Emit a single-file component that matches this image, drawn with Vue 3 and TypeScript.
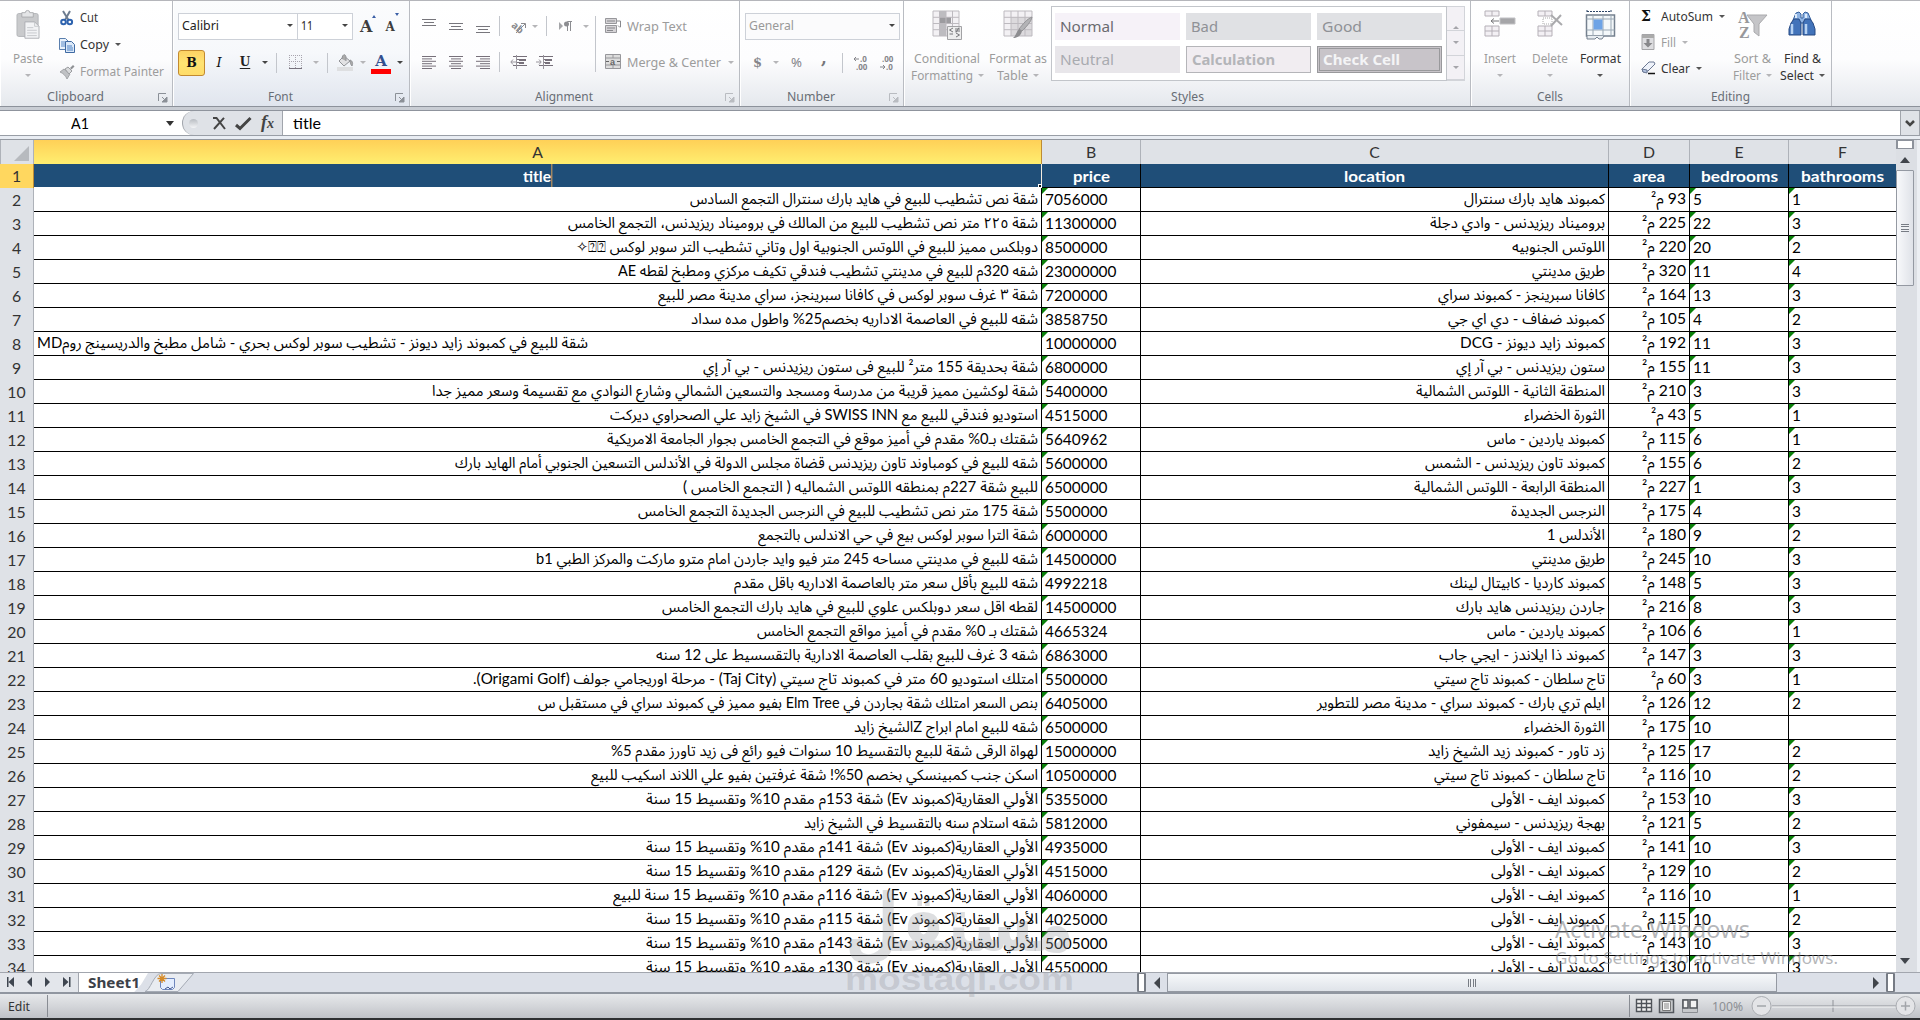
<script setup lang="ts">
import type { Directive } from 'vue'

interface Row {
  n: number
  title: string
  tw: number
  price: string
  loc: string
  lw: number
  area: number
  bed: string
  bath: string
  left?: boolean
}

/* Squeezes or stretches a label so that it takes exactly the given width. */
const vFit: Directive<HTMLElement, number> = {
  mounted(el, binding) {
    const natural = el.getBoundingClientRect().width
    if (!natural || !binding.value) return
    el.style.transformOrigin = 'left center'
    el.style.transform = `scaleX(${binding.value / natural})`
    el.style.marginRight = `${binding.value - natural}px`
  },
}

type Raw = [string, number, string, string, number, number, string, string]
const ev = (m: number) => `الأولي العقارية(كمبوند Ev) شقة ${m}م مقدم 10% وتقسيط 15 سنة`
const eve = 'كمبوند ايف - الأولى'

const raw: Raw[] = [
  ['شقة نص تشطيب للبيع في هايد بارك سنترال التجمع السادس', 348, '7056000', 'كمبوند هايد بارك سنترال', 141, 93, '5', '1'],
  ['شقة ٢٢٥ متر نص تشطيب للبيع من المالك في بروميناد ريزيدنس، التجمع الخامس', 470, '11300000', 'بروميناد ريزيدنس - وادي دجلة', 175, 225, '22', '3'],
  ['دوبلكس مميز للبيع في اللوتس الجنوبية اول وتاني تشطيب التر سوبر لوكس ⍰⍰✧', 462, '8500000', 'اللوتس الجنوبيه', 93, 220, '20', '2'],
  ['شقه 320م للبيع في مدينتي تشطيب فندقي تكيف مركزي ومطبخ لقطه AE', 420, '23000000', 'طريق مدينتي', 73, 320, '11', '4'],
  ['شقة ٣ غرف سوبر لوكس في كافانا سبرينجز، سراي مدينة مصر للبيع', 380, '7200000', 'كافانا سبرينجز - كمبوند سراي', 167, 164, '13', '3'],
  ['شقه للبيع في العاصمة الاداريه بخصم25% واطول مده سداد', 347, '3858750', 'كمبوند ضفاف - دي اي جي', 157, 105, '4', '2'],
  ['شقة للبيع في كمبوند زايد ديونز - تشطيب سوبر لوكس بحري - شامل مطبخ والدريسينج رومMD', 551, '10000000', 'كمبوند زايد ديونز - DCG', 145, 192, '11', '3'],
  ['شقة بحديقة 155 متر² للبيع فى ستون ريزيدنس - بي آر إي', 335, '6800000', 'ستون ريزيدنس - بي آر إي', 149, 155, '11', '3'],
  ['شقة لوكشين مميز قريبة من مدرسة ومسجد والتسعين الشمالي وشارع النوادي مع تقسيمة وسعر مميز جدا', 606, '5400000', 'المنطقة الثانية - اللوتس الشمالية', 189, 210, '3', '3'],
  ['استوديو فندقي للبيع مع SWISS INN في الشيخ زايد علي الصحراوي ديركت', 428, '4515000', 'الثورة الخضراء', 81, 43, '5', '1'],
  ['شقتك بـ0% مقدم في أميز موقع في التجمع الخامس بجوار الجامعة الامريكية', 431, '5640962', 'كمبوند ياردين - ماس', 118, 115, '6', '1'],
  ['شقه للبيع في كومباوند تاون ريزيدنس قضاة مجلس الدولة في الأندلس التسعين الجنوبي أمام الهايد بارك', 583, '5600000', 'كمبوند تاون ريزيدنس - الشمس', 180, 155, '6', '2'],
  ['للبيع شقة 227م بمنطقه اللوتس الشماليه ( التجمع الخامس )', 355, '6500000', 'المنطقة الرابعة - اللوتس الشمالية', 191, 227, '1', '3'],
  ['شقة 175 متر نص تشطيب للبيع في النرجس الجديدة التجمع الخامس', 400, '5500000', 'النرجس الجديدة', 94, 175, '4', '3'],
  ['شقة الترا سوبر لوكس بيع في حي الاندلس بالتجمع', 280, '6000000', 'الأندلس 1', 58, 180, '9', '2'],
  ['شقه للبيع في مدينتي مساحه 245 متر فيو وايد جاردن امام مترو ماركت والمركز الطبي b1', 502, '14500000', 'طريق مدينتي', 73, 245, '10', '3'],
  ['شقه للبيع بأقل سعر متر بالعاصمة الاداريه باقل مقدم', 304, '4992218', 'كمبوند كارديا - كابيتال لينك', 155, 148, '5', '3'],
  ['لقطه اقل سعر دوبلكس علوي للبيع في هايد بارك التجمع الخامس', 376, '14500000', 'جاردن ريزيدنس هايد بارك', 149, 216, '8', '3'],
  ['شقتك بـ 0% مقدم في أميز مواقع التجمع الخامس', 281, '4665324', 'كمبوند ياردين - ماس', 118, 106, '6', '1'],
  ['شقه 3 غرف للبيع بقلب العاصمة الادارية بالتقسسيط على 12 سنه', 382, '6863000', 'كمبوند ذا ايلاندز - ايجي جاب', 166, 147, '3', '3'],
  ['امتلك استوديو 60 متر في كمبوند تاج سيتي (Taj City) - مرحلة اوريجامي جولف (Origami Golf).', 565, '5500000', 'تاج سلطان - كمبوند تاج سيتي', 171, 60, '3', '1'],
  ['بنص السعر امتلك شقة بجاردن في Elm Tree بفيو مميز في كمبوند سراي في مستقبل س', 500, '6405000', 'ايلم تري بارك - كمبوند سراي - مدينة مصر للتطوير', 288, 126, '12', '2'],
  ['شقه للبيع امام ابراج Zالشيخ زايد', 184, '6500000', 'الثورة الخضراء', 81, 175, '10', ''],
  ['لهواة الرقى شقة للبيع بالتقسيط 10 سنوات فيو رائع فى زيد تاورز مقدم 5%', 427, '15000000', 'زد تاور - كمبوند زيد الشيخ زايد', 177, 125, '17', '2'],
  ['اسكن جنب كمبينسكي بخصم 50%! شقة غرفتين بفيو علي اللاند اسكيب للبيع', 447, '10500000', 'تاج سلطان - كمبوند تاج سيتي', 171, 116, '10', '2'],
  [ev(153), 392, '5355000', eve, 114, 153, '10', '3'],
  ['شقه استلام سنه بالتقسيط في الشيخ زايد', 234, '5812000', 'بهجة ريزيدنس - سيمفوني', 149, 121, '5', '2'],
  [ev(141), 392, '4935000', eve, 114, 141, '10', '3'],
  [ev(129), 392, '4515000', eve, 114, 129, '10', '2'],
  [ev(116) + ' للبيع', 425, '4060000', eve, 114, 116, '10', '1'],
  [ev(115), 392, '4025000', eve, 114, 115, '10', '2'],
  [ev(143), 392, '5005000', eve, 114, 143, '10', '3'],
  [ev(130), 392, '4550000', eve, 114, 130, '10', '3'],
]

const rows: Row[] = raw.map((r, i) => ({
  n: i + 2, title: r[0], tw: r[1], price: r[2], loc: r[3], lw: r[4], area: r[5], bed: r[6], bath: r[7], left: i === 6,
}))
</script>

<template>
  <div class="app">
    <div class="ribbon">
      <section class="group g-clip">
        <div class="body">
          <div class="big paste dis">
            <svg width="30" height="34" viewBox="0 0 30 34"><rect x="2.500" y="4" width="24" height="26" rx="2" fill="#c9cacc" stroke="#b1b3b6" /><path d="M8 3h4a2.500 2.500 0 0 1 5 0h4v5H8z" fill="#e4e5e7" stroke="#a7a9ac" /><path d="M11.500 13.500h11l5 5V32h-16z" fill="#f2f3f5" stroke="#aaacb0" /><path d="M22.500 13.500v5h5M14 20h7M14 23h11M14 26h11M14 29h11" fill="none" stroke="#c3c5c8" /></svg>
            <span v-fit="30">Paste</span><i class="arr"></i>
          </div>
          <div class="stack clipcol">
            <div class="line"><svg width="16" height="16" viewBox="0 0 16 16"><path d="M4 1l5.500 9M11 1L6 10" stroke="#6d7c90" stroke-width="2" fill="none" /><circle cx="4.500" cy="12" r="2.300" fill="none" stroke="#2d62ae" stroke-width="2" /><circle cx="10.800" cy="12" r="2.300" fill="none" stroke="#2d62ae" stroke-width="2" /></svg><span v-fit="18">Cut</span></div>
            <div class="line"><svg width="16" height="16" viewBox="0 0 16 16"><path d="M.5 1.500h6l3 3v8h-9z" fill="#eaf2fb" stroke="#5a7fae" /><path d="M2 5h4M2 7h4M2 9h4" stroke="#5b8bc9" /><path d="M6.500 4.500h6l3 3v8h-9z" fill="#dce9f8" stroke="#3f6aa3" /><path d="M8 9h5M8 11h6M8 13h6" stroke="#4d81c4" /></svg><span v-fit="29">Copy</span><i class="arr"></i></div>
            <div class="line dis"><svg width="16" height="16" viewBox="0 0 16 16"><path d="M1 8l4-3 6 5-3 5c-1-3-4-6-7-7z" fill="#bfc1c4" stroke="#a3a5a8" /><path d="M6 5l3-2 4 4-3 3z" fill="#d9dadc" stroke="#9b9da0" /><path d="M11 4l3-3 1.500 1.500-3 3z" fill="#8e9093" /></svg><span v-fit="84">Format Painter</span></div>
          </div>
        </div>
        <footer><span v-fit="57">Clipboard</span><svg class="launch" width="10" height="10" viewBox="0 0 10 10"><path d="M.5 8V.5H8" fill="none" stroke="#8b9097" /><path d="M4 4l3 3M9 4v5H4z" fill="#8b9097" stroke="#8b9097" /></svg></footer>
      </section>

      <section class="group g-font">
        <div class="fontrow">
          <div class="combo name"><span v-fit="37">Calibri</span><i class="arr dark"></i></div>
          <div class="combo size"><span v-fit="12">11</span><i class="arr dark"></i></div>
          <span class="grow serif">A<i></i></span><span class="shrink serif">A<i></i></span>
        </div>
        <div class="fontrow second">
          <b class="bold serif">B</b><span class="ital serif">I</span><span class="und serif">U</span><i class="arr dark"></i><i class="vsep"></i>
          <svg class="bord" width="14" height="15" viewBox="0 0 14 15"><path d="M.5 0v13M6.500 0v13M12.500 0v13M0 .5h13M0 6.500h13" stroke="#a9a5ae" stroke-dasharray="1 1" /><path d="M0 13.500h13" stroke="#77727d" /></svg><i class="arr lt"></i><i class="vsep s2"></i>
          <svg class="fill" width="17" height="17" viewBox="0 0 17 17"><path d="M2 7l5-5 6 5-6 5z" fill="#e2e2e4" stroke="#929498" /><path d="M5 5c0-5 4-6 4-1v3M13 6c3 1 3 4 2 6-1-1-2-3-2-6" fill="#aaa" stroke="#929498" /><path d="M0 13h16v4H0z" fill="#dedfe1" /></svg><i class="arr lt a2"></i>
          <span class="fcolor serif">A</span><i class="arr dark a3"></i>
        </div>
        <footer><span v-fit="25">Font</span><svg class="launch" width="10" height="10" viewBox="0 0 10 10"><path d="M.5 8V.5H8" fill="none" stroke="#8b9097" /><path d="M4 4l3 3M9 4v5H4z" fill="#8b9097" stroke="#8b9097" /></svg></footer>
      </section>

      <section class="group g-align">
        <div class="body">
          <div class="stack alcol">
            <div class="icons">
              <svg width="14" height="15" viewBox="0 0 14 15"><path d="M0 .5h14M2 3.500h10M0 6.500h14" stroke="#77767c" /></svg>
              <svg width="14" height="15" viewBox="0 0 14 15"><path d="M0 4.500h14M2 7.500h10M0 10.500h14" stroke="#77767c" /></svg>
              <svg width="14" height="15" viewBox="0 0 14 15"><path d="M0 7.500h14M2 10.500h10M0 13.500h14" stroke="#77767c" /></svg>
              <i class="vsep"></i>
              <svg class="ori" width="16" height="16" viewBox="0 0 16 16"><text x="1" y="11" font-size="10" font-weight="bold" fill="#8a8a8e" transform="rotate(40 4 8)" font-family="Noto Sans">ab</text><path d="M5 15L14 6M10 5.500h4.500V10" fill="none" stroke="#8a8a8e" /></svg><i class="arr lt"></i>
              <i class="vsep s2"></i>
              <svg class="para" width="14" height="12" viewBox="0 0 14 12"><path d="M0 2l4 4-4 4z" fill="#a4a5a8" /><path d="M8.500 11V1.500H13M11.500 11V1.500" fill="none" stroke="#8c8d91" /><circle cx="7.500" cy="4" r="2.500" fill="#8c8d91" /></svg><i class="arr lt a2"></i>
            </div>
            <div class="icons">
              <svg width="14" height="13" viewBox="0 0 14 13"><path d="M0 .5h14M0 2.900h10M0 5.300h14M0 7.700h10M0 10.100h14M0 12.500h10" stroke="#77707a" /></svg>
              <svg width="14" height="13" viewBox="0 0 14 13"><path d="M0 .5h14M2 2.900h10M0 5.300h14M2 7.700h10M0 10.100h14M2 12.500h10" stroke="#77707a" /></svg>
              <svg width="14" height="13" viewBox="0 0 14 13"><path d="M0 .5h14M4 2.900h10M0 5.300h14M4 7.700h10M0 10.100h14M4 12.500h10" stroke="#77707a" /></svg>
              <i class="vsep"></i>
              <svg class="ind" width="17" height="14" viewBox="0 0 17 14"><path d="M3 1.500h14M7 4.500h9M7 7.500h6M3 10.500h14" stroke="#77707a" /><path d="M9 5h7M9 8h5" stroke="#77707a" stroke-width="2" /><path d="M6 7H1M3 4.500L.8 7 3 9.500M6.500 0v14" fill="none" stroke="#98949c" /></svg>
              <svg class="ind i2" width="17" height="14" viewBox="0 0 17 14"><path d="M3 1.500h14M7 4.500h9M7 7.500h6M3 10.500h14" stroke="#77707a" /><path d="M9 5h7M9 8h5" stroke="#77707a" stroke-width="2" /><path d="M0 7h5M3 4.500L5.200 7 3 9.500M7.500 0v14" fill="none" stroke="#98949c" /></svg>
            </div>
          </div>
          <i class="vsep tall"></i>
          <div class="stack wrapcol dis">
            <div class="line"><svg width="17" height="16" viewBox="0 0 17 16"><path d="M.5.500h11v5H.5zM.5 7.500h11v7H.5z" fill="#d5d3d6" stroke="#97979b" /><path d="M2 3h8M2 10h8M2 12.500h6" stroke="#88888c" /><path d="M12 3h3.500v6M13 7.500l2 2" fill="none" stroke="#88888c" /></svg><span v-fit="60">Wrap Text</span></div>
            <div class="line"><svg width="17" height="16" viewBox="0 0 17 16"><path d="M.5.500h15v14H.5zM.5 4h15M.5 11h15M8 .5V4M8 11v4" fill="#ddd" stroke="#97979b" /><path d="M1 7.500h3M12 7.500h3" stroke="#666" /><text x="5" y="10.500" font-size="9" font-weight="bold" fill="#666" font-family="Liberation Sans">a</text></svg><span v-fit="94">Merge &amp; Center</span><i class="arr"></i></div>
          </div>
        </div>
        <footer><span v-fit="58">Alignment</span><svg class="launch lt" width="10" height="10" viewBox="0 0 10 10"><path d="M.5 8V.5H8" fill="none" stroke="#b9bcc1" /><path d="M4 4l3 3M9 4v5H4z" fill="#b9bcc1" stroke="#b9bcc1" /></svg></footer>
      </section>

      <section class="group g-num">
        <div class="fontrow"><div class="combo fmt"><span v-fit="45">General</span><i class="arr dark"></i></div></div>
        <div class="fontrow second">
          <b class="dollar serif">$</b><i class="arr lt"></i><span class="pct" v-fit="11">%</span><b class="comma serif">,</b><i class="vsep"></i>
          <svg class="dec" width="16" height="16" viewBox="0 0 16 16"><path d="M6 4H1M3 2L1 4l2 2" fill="none" stroke="#85858a" /><text x="7" y="7" class="dt">.0</text><text x="3" y="15" class="dt">.00</text></svg>
          <svg class="dec d2" width="16" height="16" viewBox="0 0 16 16"><path d="M1 12h5M4 10l2 2-2 2" fill="none" stroke="#85858a" /><text x="3" y="7" class="dt">.00</text><text x="7" y="15" class="dt">.0</text></svg>
        </div>
        <footer><span v-fit="48">Number</span><svg class="launch" width="10" height="10" viewBox="0 0 10 10"><path d="M.5 8V.5H8" fill="none" stroke="#b9bcc1" /><path d="M4 4l3 3M9 4v5H4z" fill="#b9bcc1" stroke="#b9bcc1" /></svg></footer>
      </section>

      <section class="group g-style">
        <div class="body">
          <div class="big dis cond">
            <svg width="30" height="30" viewBox="0 0 30 30"><path d="M1 1h26v25H1z" fill="#f3f1f4" /><path d="M8 1h6v25H8z" fill="#bdbcc0" /><path d="M8 7h11v6H8z" fill="#9c9b9f" /><path d="M1 1h26v25H1zM1 7.300h26M1 13.500h26M1 19.700h26M7.500 1v25M14 1v25M20.500 1v25" fill="none" stroke="#bdbabf" /><path d="M15.500 16.500h14v13h-14z" fill="#eee" stroke="#a2a2a5" /><path d="M21 18l-3.500 2 3.500 2M17.500 24H21M23 19h5M23 21h5M27 17.500l-3 5M24 23l3.500 2-3.500 2" fill="none" stroke="#77777a" /></svg>
            <span v-fit="66">Conditional</span><div class="l2"><span v-fit="62">Formatting</span><i class="arr"></i></div>
          </div>
          <div class="big dis tbl">
            <svg width="30" height="30" viewBox="0 0 30 30"><path d="M1 1h28v25H1z" fill="#f3f1f4" /><path d="M8 7h21v19H8z" fill="#dcdadd" /><path d="M1 1h28v25H1zM1 7.300h28M1 13.500h28M1 19.700h28M8 1v25M15 1v25M22 1v25" fill="none" stroke="#bdbabf" /><path d="M29 7c-1 5-6 10-10 14l-3-2c4-5 8-10 13-12z" fill="#b3b3b6" stroke="#939396" /><path d="M19 21c-1 5-5 7-9 7 3-2 3-6 6-9z" fill="#8d8d90" /></svg>
            <span v-fit="58">Format as</span><div class="l2"><span v-fit="31">Table</span><i class="arr"></i></div>
          </div>
          <div class="gallery">
            <div class="gcell normal"><span v-fit="54">Normal</span></div><div class="gcell"><span v-fit="27">Bad</span></div><div class="gcell"><span v-fit="40">Good</span></div>
            <div class="gcell neutral"><span v-fit="54">Neutral</span></div><div class="gcell calc"><span v-fit="83">Calculation</span></div><div class="gcell check"><span v-fit="77">Check Cell</span></div>
          </div>
          <div class="gscroll"><div><i class="arr up"></i></div><div><i class="arr"></i></div><div><i class="arr more"></i></div></div>
        </div>
        <footer><span v-fit="33">Styles</span></footer>
      </section>

      <section class="group g-cells">
        <div class="body">
          <div class="big dis"><svg width="32" height="30" viewBox="0 0 32 30"><path d="M1 1h14v5H1zM8 1v5M1 16h14v10H1zM1 21h14M8 16v10" fill="#f3f0f4" stroke="#b5b0b7" /><path d="M16 8h15v6H16z" fill="#a5a5a8" stroke="#c1c1c4" /><path d="M15 11H7M10 8.500L7 11l3 2.500" fill="none" stroke="#77777a" /></svg><span v-fit="32">Insert</span><i class="arr"></i></div>
          <div class="big dis"><svg width="32" height="30" viewBox="0 0 32 30"><path d="M4 1h14v5H4zM11 1v5M4 16h14v10H4zM4 21h14M11 16v10" fill="#f3f0f4" stroke="#b5b0b7" /><path d="M9 8h9v6H9z" fill="none" stroke="#aaa" stroke-dasharray="1 1" /><path d="M17 5l11 10M27 5L17 16" stroke="#aaaaad" stroke-width="2" /></svg><span v-fit="36">Delete</span><i class="arr"></i></div>
          <div class="big"><svg width="32" height="30" viewBox="0 0 32 30"><path d="M3 1.500h24M3 0v3M27 0v3" stroke="#2c4567" stroke-dasharray="2 1" /><path d="M2.500 5h28v21h-28z" fill="#f4f8fa" stroke="#74808e" stroke-width="1.500" /><path d="M9 5v21M19 5v21M27 5v21M2.500 9h28M2.500 20h28" stroke="#9aa8b4" /><path d="M9.500 9.500h9v10h-9z" fill="#6da3e6" /><path d="M3 26v3h8l2-2 2 2h3l2-3" fill="#e8edf1" stroke="#74808e" /></svg><span v-fit="41">Format</span><i class="arr"></i></div>
        </div>
        <footer><span v-fit="26">Cells</span></footer>
      </section>

      <section class="group g-edit">
        <div class="body">
          <div class="stack edcol">
            <div class="line"><b class="sigma serif">Σ</b><span v-fit="52">AutoSum</span><i class="arr"></i></div>
            <div class="line dis"><svg width="15" height="16" viewBox="0 0 15 16"><path d="M1 .5h12v15H1z" fill="#dddde0" stroke="#a5a5a8" /><path d="M1 1h12v3H1z" fill="#aaa" /><path d="M5.500 5h3v4h3L7 13.500 2.500 9h3z" fill="#88888b" /></svg><span v-fit="15">Fill</span><i class="arr"></i></div>
            <div class="line"><svg width="15" height="14" viewBox="0 0 15 14"><path d="M1 8l7-7h5l1 2-7 7-5 1z" fill="#eef2fa" stroke="#6b7893" /><path d="M1 8l5 1v3l-4-1z" fill="#b2c2e0" stroke="#6b7893" /><path d="M7 12.500h7" stroke="#111" stroke-width="1.500" /></svg><span v-fit="29">Clear</span><i class="arr"></i></div>
          </div>
          <div class="big dis sort"><svg width="30" height="30" viewBox="0 0 30 30"><path d="M9 5h20l-8 9v12l-5-4v-8z" fill="#c5c5c8" stroke="#aaaaad" /><text x="0" y="12.500" class="az">A</text><text x="1" y="27.500" class="az">Z</text></svg><span v-fit="37">Sort &amp;</span><div class="l2"><span v-fit="28">Filter</span><i class="arr"></i></div></div>
          <div class="big find"><svg width="30" height="30" viewBox="0 0 30 30"><path d="M9 3l3-1 2 2v4h2V4l2-2 3 1 3 7v3H6v-3z" fill="#8fb4e4" stroke="#35609e" /><path d="M4 13l3-4h5l2 4v12H2v-6zM26 13l-3-4h-5l-2 4v12h12v-6z" fill="#4273ba" stroke="#274a83" /><path d="M5 14v10M19 14v10" stroke="#b6d2f3" stroke-width="2.500" /><path d="M9 4v4M19 4v4" stroke="#dcebfc" stroke-width="2" /></svg><span v-fit="37">Find &amp;</span><div class="l2"><span v-fit="34">Select</span><i class="arr"></i></div></div>
        </div>
        <footer><span v-fit="39">Editing</span></footer>
      </section>
      <section class="rest"></section>
    </div>

    <div class="formula">
      <div class="namebox"><span v-fit="18">A1</span></div><i class="narr"></i>
      <div class="fx">
        <i class="knob"></i>
        <svg class="x" width="14" height="13" viewBox="0 0 14 13"><path d="M1 1h3.500L13 12M12 .8L2 12" fill="none" stroke="#444" stroke-width="2" /></svg>
        <svg class="v" width="17" height="13" viewBox="0 0 17 13"><path d="M1 8l4 3.500L15.500 1" fill="none" stroke="#444" stroke-width="3" /></svg>
        <em class="serif">f<small>x</small></em>
      </div>
      <div class="finput"><span v-fit="28">title</span></div>
      <div class="fexp"><svg width="10" height="7" viewBox="0 0 10 7"><path d="M1 1l4 4 4-4" fill="none" stroke="#444" stroke-width="2.500" /></svg></div>
    </div>

    <div class="sheet">
      <div class="grid">
        <div class="r head"><div class="corner"><i></i></div><div class="ch sel">A</div><div class="ch">B</div><div class="ch">C</div><div class="ch">D</div><div class="ch">E</div><div class="ch last">F</div></div>
        <div class="r first">
          <div class="rh on">1</div>
          <div class="c ctr editing"><span v-fit="29">title</span><i class="handle"></i></div>
          <div class="c ctr"><span v-fit="37">price</span></div>
          <div class="c ctr"><span v-fit="61">location</span></div>
          <div class="c ctr"><span v-fit="32">area</span></div>
          <div class="c ctr"><span v-fit="77">bedrooms</span></div>
          <div class="c ctr last"><span v-fit="83">bathrooms</span></div>
        </div>
        <div v-for="r in rows" :key="r.n" class="r">
          <div class="rh">{{ r.n }}</div>
          <div class="c end" :class="{ start: r.left }"><span dir="rtl" v-fit="r.tw">{{ r.title }}</span></div>
          <div class="c flag">{{ r.price }}</div>
          <div class="c end"><span dir="rtl" v-fit="r.lw">{{ r.loc }}</span></div>
          <div class="c end"><span dir="rtl" v-fit="r.area > 99 ? 44 : 35">{{ r.area }} م²</span></div>
          <div class="c flag">{{ r.bed }}</div>
          <div class="c last" :class="{ flag: r.bath }">{{ r.bath }}</div>
        </div>
      </div>
      <div class="vscroll"><div class="split"></div><div class="up"><i></i></div><div class="thumb"><i></i></div><div class="down"><i></i></div></div>
    </div>

    <div class="tabs">
      <div class="nav"><svg width="79" height="19" viewBox="0 0 79 19"><path d="M7 4h1.500v10H7zM14 4v10L8.500 9zM32 4v10L27 9zM45 4v10l5-5zM63 4v10l5.500-5zM69 4h1.500v10H69z" fill="#3f4650" /></svg></div>
      <div class="tab"><b v-fit="52">Sheet1</b></div>
      <svg class="newtab" width="50" height="19" viewBox="0 0 50 19"><path d="M0 18.500C5 18 9 .5 16 .5h32.500L33 18.500z" fill="#e9ecf1" stroke="#a5abb5" /><path d="M15.500 5.500h14v9l-2 2h-10l-2-2z" fill="#e4eeff" stroke="#6e86bd" /><path d="M20 16l3-2 2 2 3-2" stroke="#40568f" fill="none" /><path d="M17 1v9M12.500 5.500h9M14 2.500l6 6M20 2.500l-6 6" stroke="#d58b2a" stroke-width="1.300" /></svg>
      <div class="hfill"></div>
      <div class="hsplit"></div><div class="harr"><i class="l"></i></div><div class="hthumb"><i></i></div><div class="htrack"></div><div class="harr"><i class="rt"></i></div><div class="hsplit e"></div>
    </div>
    <div class="status">
      <span class="edit" v-fit="22">Edit</span><i class="s1"></i><div class="sp"></div><i class="s1 s2"></i>
      <svg width="64" height="16" viewBox="0 0 64 16"><path d="M.5 1.500h15v12H.5zM5.500 1v13M10.500 1v13M0 5.500h16M0 9.500h16" fill="#f2f2f2" stroke="#4f5359" stroke-width="1.400" /><path d="M23.500 1.500h14v13h-14z" fill="#c6c8cb" stroke="#54585e" stroke-width="1.500" /><path d="M26.500 3.500h8v9h-8z" fill="#f5f5f5" stroke="#777" /><path d="M28 6h5M28 8h5M28 10h5" stroke="#888" /><path d="M46.500 1.500h15v13h-15z" fill="#c6c8cb" stroke="#8b8e93" /><path d="M47 2h5v8h-5zM54 2h7v8h-7z" fill="#f3f3f3" stroke="#54585e" stroke-width="1.500" /></svg>
      <span class="zoom" v-fit="31">100%</span>
      <svg class="slider" width="168" height="22" viewBox="0 0 168 22"><path d="M20 11h125M81 5v12" stroke="#8f9298" /><path d="M20 12h125" stroke="#f4f5f6" /><g fill="#e3e4e7" stroke="#aaadb2"><circle cx="9.500" cy="11" r="9.500" /><circle cx="153.500" cy="11" r="9.500" /></g><path d="M5 11h9M149 11h9M153.500 6.500v9" stroke="#a2a5aa" stroke-width="1.500" /></svg>
    </div>
    <div class="taskbar"></div>

    <div class="mark ar"><span dir="rtl" v-fit="229">مستقل</span></div>
    <div class="mark en"><span v-fit="229">mostaql.com</span></div>
    <div class="act a1"><span v-fit="195">Activate Windows</span></div>
    <div class="act a2"><span v-fit="283">Go to Settings to activate Windows.</span></div>
  </div>
</template>

<style>
body { margin: 0; overflow: hidden; }
</style>

<style scoped>
* { box-sizing: border-box; }
.app { position: relative; width: 1920px; height: 1020px; overflow: hidden; background: #d3d7de; font: 13.3px/17px "Noto Sans", sans-serif; color: #333; display: flex; flex-direction: column; }
span, b { white-space: nowrap; flex: none; display: inline-block; }
svg { display: block; flex: none; overflow: visible; }
i { display: block; flex: none; }
.serif { font-family: "DejaVu Serif", serif; }
.ribbon { height: 107px; flex: none; display: flex; border-top: 1px solid #b5b6bb; border-bottom: 1px solid #8d929b; background: linear-gradient(#fff, #fdfdfe 55%, #e5e8ed); }
.group { display: flex; flex-direction: column; border-right: 1px solid #b9bcc2; box-shadow: inset 1px 0 #fff; flex: none; }
.g-clip { width: 173px; } .g-font { width: 237px; background: linear-gradient(#fbfcfd, #f6f8fb 50%, #e0e5ee); }
.g-align { width: 330px; } .g-num { width: 164px; } .g-style { width: 567px; } .g-cells { width: 159px; } .g-edit { width: 202px; }
.rest { flex: 1; }
.body { height: 85px; display: flex; }
footer { height: 20px; margin-top: auto; margin-bottom: 0; display: flex; justify-content: center; position: relative; color: #686d75; line-height: 20px; padding-right: 22px; }
.g-style footer, .g-cells footer, .g-edit footer { padding-right: 0; }
.launch { position: absolute; right: 4px; top: 7px; }
.arr { width: 0; height: 0; border: 3px solid transparent; border-top: 3px solid #555; border-bottom: 0; }
.dis .arr, .arr.lt { border-top-color: #b5b5b8; }
.dis { color: #9c9c9c; }
.big { display: flex; flex-direction: column; align-items: center; padding-top: 9px; }
.big > svg { margin-bottom: 10px; height: 30px; }
.big > .arr { margin-top: 7px; }
.l2 { display: flex; align-items: center; gap: 5px; }
.paste { width: 56px; }
.stack { display: flex; flex-direction: column; }
.line { display: flex; align-items: center; height: 27px; gap: 5px; }
.clipcol { padding: 3px 0 0 3px; }
.clipcol .line .arr { margin-left: 1px; }
.fontrow { display: flex; align-items: center; height: 27px; margin-top: 12px; padding-left: 5px; }
.fontrow.second { margin-top: 9px; }
.combo { height: 27px; border: 1px solid #cdd1d8; background: #fff; display: flex; align-items: center; justify-content: space-between; padding: 0 4px 2px 3px; color: #222; }
.combo.name { width: 120px; } .combo.size { width: 56px; margin-left: -1px; }
.combo.fmt { width: 155px; background: #fbfbfc; color: #999; }
.arr.dark { border-top-color: #444; }
.grow, .shrink { font-weight: bold; color: #3d3d3d; position: relative; font-size: 16px; line-height: 26px; margin-left: 7px; }
.shrink { font-size: 12px; margin-left: 13px; line-height: 30px; }
.grow i, .shrink i { position: absolute; right: -4px; top: 1px; border: 2.5px solid transparent; border-bottom: 3px solid #3b5fa6; border-top: 0; }
.shrink i { border-bottom: 0; border-top: 3px solid #3b5fa6; }
.bold { width: 27px; height: 26px; border: 1px solid #c28a30; border-radius: 3px; background: linear-gradient(#fdd263, #ffe373 50%, #ffdc68); text-align: center; line-height: 24px; color: #111; font-size: 12.500px; }
.ital { width: 12px; margin-left: 8px; font-style: italic; text-align: center; font-size: 13px; color: #111; }
.und { width: 14px; margin-left: 13px; text-align: center; text-decoration: underline; font-weight: bold; font-size: 12px; color: #222; text-underline-offset: 2px; }
.second .arr { margin-left: 10px; }
.vsep { width: 1px; height: 20px; background: #c3c6cc; }
.second .vsep { margin-left: 8px; }
.bord { margin-left: 12px; }
.second .vsep.s2 { margin-left: 8px; }
.fill { margin-left: 9px; }
.second .arr.a2 { margin-left: 6px; }
.fcolor { width: 20px; height: 20px; margin-left: 5px; border-bottom: 5px solid #f00; text-align: center; font-weight: bold; font-size: 15px; line-height: 14px; color: #33508f; margin-top: 2px; }
.second .arr.a3 { margin-left: 6px; }
.icons { display: flex; align-items: center; height: 36px; }
.alcol { width: 185px; padding: 7px 0 0 12px; }
.icons > svg { margin-right: 13px; }
.icons > svg:nth-child(3) { margin-right: 9px; }
.icons > svg.ori { margin: 0 5px 0 11px; }
.icons .s2 { margin-left: 8px; }
.icons > svg.para { margin: 0 10px 0 12px; }
.icons > svg.ind { margin: 0 9px 0 10px; }
.icons > svg.i2 { margin: 0; }
.tall { height: 56px; margin-top: 15px; }
.wrapcol { padding: 7px 0 0 9px; }
.wrapcol .line { height: 36px; }
.wrapcol .arr { margin-left: 2px; }
.dollar { width: 10px; margin-left: 8px; color: #85858a; font-size: 13px; }
.pct { margin-left: 12px; color: #85858a; }
.comma { margin-left: 19px; color: #77777a; font-size: 17px; width: 8px; margin-top: -8px; }
.g-num .second .vsep { margin-left: 13px; }
.dec { margin-left: 10px; } .d2 { margin-left: 10px; }
.dt { font: bold 8px "Noto Sans", sans-serif; fill: #85858a; }
.cond { width: 86px; } .tbl { width: 56px; margin-right: 2px; }
.gallery { width: 396px; height: 75px; margin: 5px 0 0 3px; border: 1px solid #c2c5ca; background: #fff; display: grid; grid-template-columns: repeat(3, 125px); grid-template-rows: 27px 27px; gap: 6px; padding: 6px 3px; }
.gcell { background: #e0e1e4; color: #8f9196; display: flex; align-items: center; padding-left: 5px; font-size: 15px; }
.gcell.normal { background: #f6f2f8; color: #6a6a70; }
.gcell.neutral { background: #e8e6ea; color: #a9abb0; }
.gcell.calc { background: #f1edf1; color: #b4b5b9; border: 1px solid #b5b5b9; font-weight: bold; }
.gcell.check { background: #c8c4c9; color: #f4f4f6; border: 3px double #99999c; font-weight: bold; padding-left: 3px; }
.gscroll { margin-top: 5px; width: 18px; height: 75px; display: flex; flex-direction: column; border: 1px solid #d2d4d9; border-left: 0; }
.gscroll div { flex: 1; background: #f3f1f5; border-bottom: 1px solid #d2d4d9; display: flex; align-items: center; justify-content: center; }
.gscroll .arr { border-top-color: #a5a5aa; }
.gscroll .up { transform: rotate(180deg); }
.gscroll .more { box-shadow: 0 -3px 0 -2px #a5a5aa; }
.g-cells .body { padding-left: 4px; } .g-cells .big { width: 50px; }
.edcol { padding: 2px 0 0 11px; width: 98px; }
.edcol .line { height: 26px; gap: 6px; }
.edcol .line > :first-child { width: 15px; margin-right: -1px; }
.edcol .line .arr { margin-left: 0; }
.sigma { color: #111; font-size: 14px; }
.sort { width: 49px; } .find { width: 50px; }
.az { font: bold 16px "Liberation Serif", serif; fill: #98989b; }

.formula { height: 33px; flex: none; padding-top: 4px; display: flex; align-items: center; background: linear-gradient(#c9cdd4 0 3px, #8f949d 3px 4px, #fff 4px 28px, #999ea6 28px 29px, #e9edf3 29px 32px, #9398a0 32px 33px); padding-bottom: 5px; font-family: Lato, sans-serif; font-size: 15.400px; color: #000; }
.namebox { width: 157px; text-align: center; padding-left: 2px; flex: none; }
.narr { margin-left: 9px; border: 4.500px solid transparent; border-top: 5px solid #333; border-bottom: 0; }
.fx { margin-left: 8px; width: 101px; height: 24px; flex: none; background: #dfe2e7; border: 1px solid #a1a5ac; border-width: 0 1px 0 1px; border-radius: 12px 0 0 12px; display: flex; align-items: center; }
.knob { width: 9px; height: 9px; border-radius: 50%; background: linear-gradient(#b8bcc2, #f4f5f7); margin-left: 6px; }
.fx .x { margin-left: 14px; } .fx .v { margin-left: 9px; }
.fx em { margin-left: 9px; font-size: 18px; line-height: 20px; font-weight: bold; color: #444; font-family: "Liberation Serif", serif; }
.fx small { font-size: 14px; }
.finput { flex: 1; padding-left: 10px; }
.fexp { width: 20px; height: 24px; background: #dfe2e7; border: 1px solid #a1a5ac; border-top: 0; border-bottom: 0; display: flex; align-items: center; justify-content: center; }

.sheet { height: 832px; flex: none; display: flex; font-family: Lato, "Noto Sans Arabic", "DejaVu Sans", sans-serif; font-size: 15.400px; color: #000; }
.grid { width: 1896px; flex: none; background: #fff; overflow: hidden; }
.r { display: grid; grid-template-columns: 34px 1008px 99px 468px 81px 99px 107px; height: 24px; }
.corner, .ch, .rh { background: #dfe2e7; border-right: 1px solid #aeb2b9; border-bottom: 1px solid #aeb2b9; text-align: center; line-height: 24px; color: #333; font-size: 15.800px; }
.corner { display: flex; justify-content: flex-end; align-items: flex-end; padding: 0 4px 3px 0; border-left: 1px solid #aeb2b9; }
.corner i { border-left: 15px solid transparent; border-bottom: 15px solid #b7babf; }
.ch.sel { background: linear-gradient(#ffd057, #ffee70); border-color: #bd8c35; }
.rh.on { background: #ffd75f; border-color: #bd8c35; }
.ch.last { border-right: 0; }
.c { height: 24px; border-right: 1px solid #000; border-bottom: 1px solid #000; padding: 0 3px; line-height: 23px; white-space: nowrap; display: flex; position: relative; }
.c.last { border-right: 0; }
.c > span[dir] { font-size: 14.900px; line-height: 21px; }
.end { justify-content: flex-end; }
.start { justify-content: flex-start; }
.ctr { justify-content: center; background: #1f4e78; color: #fff; font-weight: bold; line-height: 25px; }
.editing { border-right-color: #f3ece0; border-bottom-color: #fff; }
.editing span { border-right: 1px solid #d9a05a; height: 23px; }
.handle { position: absolute; right: -1px; bottom: -1px; width: 4px; height: 4px; background: #111; border: 1px solid #fff; }
.flag::before { content: ""; position: absolute; left: 0; top: 0; border-top: 6px solid #0a800a; border-right: 6px solid transparent; }

.vscroll { width: 24px; background: #dcdfe4; display: flex; flex-direction: column; align-items: center; padding-right: 3px; border-right: 3px solid #eceff3; }
.split { width: 18px; height: 9px; border: 2px solid #8d929b; background: #fff; border-width: 1px 2px; }
.up { height: 21px; display: flex; align-items: center; }
.up i { border: 5px solid transparent; border-bottom: 6px solid #41454b; border-top: 0; }
.thumb { width: 18px; height: 116px; border: 1px solid #9499a2; background: linear-gradient(90deg, #f8f9fb, #dfe2e8); display: flex; align-items: center; justify-content: center; border-radius: 1px; }
.thumb i { width: 8px; height: 8px; background: repeating-linear-gradient(#777c84 0 1px, #eef0f3 1px 2.300px); }
.down { margin-top: auto; height: 22px; display: flex; align-items: center; }
.down i { border: 5px solid transparent; border-top: 6px solid #41454b; border-bottom: 0; }

.tabs { height: 22px; flex: none; display: flex; border-top: 1px solid #a2a6ae; border-bottom: 2px solid #9096a0; background: #dce0e8; font-size: 14px; }
.nav { width: 79px; border-right: 1px solid #a2a6ae; background: #e3e6eb; }
.tab { width: 69px; background: #fff; clip-path: polygon(0 0, 100% 0, 90% 60%, 80% 100%, 0 100%); padding-left: 9px; line-height: 19px; color: #3c4148; font-family: "Noto Sans", sans-serif; }
.newtab { margin-left: -3px; }
.hfill { flex: 1; }
.hsplit { width: 9px; height: 19px; border: 1px solid #767b84; border-width: 1px 2px; background: #fff; border-radius: 1px; }
.harr { width: 21px; display: flex; align-items: center; justify-content: center; }
.harr .l { border: 6px solid transparent; border-right: 6px solid #41454b; border-left: 0; }
.harr .rt { border: 6px solid transparent; border-left: 6px solid #41454b; border-right: 0; }
.hthumb { width: 610px; height: 19px; border: 1px solid #9499a2; background: linear-gradient(#f6f8fa, #dfe3e9); display: flex; align-items: center; justify-content: center; }
.hthumb i { width: 8px; height: 8px; background: repeating-linear-gradient(90deg, #777c84 0 1px, #eef0f3 1px 2.300px); }
.htrack { width: 88px; }
.hsplit.e { margin-right: 25px; }
.status { height: 24px; flex: none; background: linear-gradient(#e6e8eb, #d2d4d8 55%, #bfc2c7); display: flex; align-items: center; padding-left: 8px; color: #333; }
.s1 { width: 1px; height: 22px; background: #888c93; margin-left: 17px; }
.s1.s2 { margin: 0 7px 0 0; }
.sp { flex: 1; }
.status > svg:not(.slider) { margin-left: -1px; }
.zoom { margin-left: 12px; color: #8c8f94; }
.slider { margin-left: 9px; }
.taskbar { height: 2px; background: #2e3032; }
.mark { position: absolute; left: 845px; font-family: "DejaVu Sans", sans-serif; font-weight: bold; color: rgba(150, 153, 160, .32); }
.mark.ar { top: 876px; font-size: 80px; line-height: 96px; }
.mark.en { top: 963px; font: bold 31px/34px "Liberation Sans", sans-serif; }
.act { position: absolute; left: 1555px; color: rgba(125, 128, 134, .58); }
.a1 { top: 914px; font-size: 23px; line-height: 30px; }
.a2.act { top: 946px; font-size: 16px; line-height: 24px; }
</style>
